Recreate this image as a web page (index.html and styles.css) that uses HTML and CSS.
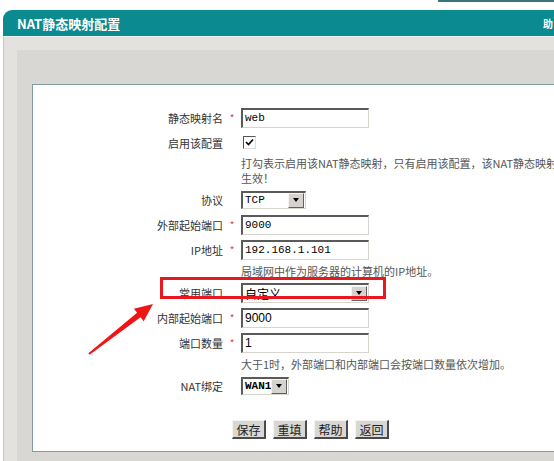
FILE: index.html
```html
<!doctype html>
<html lang="zh">
<head>
    <meta charset="utf-8">
    <title>NAT静态映射配置</title>
    <link rel="stylesheet" href="styles.css">
</head>
<body>
    <div class="top-strip"><div class="top-line"></div></div>
    <div class="shell">
        <div class="header">
            <span class="title">NAT静态映射配置</span>
            <span class="tools">助</span>
        </div>
        <div class="body-area">
            <div class="inner">
                <div class="panel">
                    <div class="form">
                        <div class="row">
                            <span class="label">静态映射名</span><span class="req">*</span>
                            <div class="input mono w128">web</div>
                        </div>
                        <div class="row">
                            <span class="label">启用该配置</span><span class="req"></span>
                            <span class="check">
                                <svg width="9" height="9" viewBox="0 0 9 9"><path d="M1 4 L3.5 6.5 L8 1.5" fill="none" stroke="#000" stroke-width="1.6"/></svg>
                            </span>
                        </div>
                        <div class="help">打勾表示启用该NAT静态映射，只有启用该配置，该NAT静态映射<br>生效！</div>
                        <div class="row">
                            <span class="label">协议</span><span class="req"></span>
                            <div class="select mono w65"><span class="val">TCP</span><span class="drop"><i></i></span></div>
                        </div>
                        <div class="row">
                            <span class="label">外部起始端口</span><span class="req">*</span>
                            <div class="input mono w128">9000</div>
                        </div>
                        <div class="row">
                            <span class="label">IP地址</span><span class="req">*</span>
                            <div class="input mono w128">192.168.1.101</div>
                        </div>
                        <div class="help single">局域网中作为服务器的计算机的IP地址。</div>
                        <div class="row">
                            <span class="label">常用端口</span><span class="req"></span>
                            <div class="select sans w128 tall"><span class="val">自定义</span><span class="drop"><i></i></span></div>
                        </div>
                        <div class="row">
                            <span class="label">内部起始端口</span><span class="req">*</span>
                            <div class="input sans w128">9000</div>
                        </div>
                        <div class="row">
                            <span class="label">端口数量</span><span class="req">*</span>
                            <div class="input sans w128">1</div>
                        </div>
                        <div class="help single">大于1时，外部端口和内部端口会按端口数量依次增加。</div>
                        <div class="row">
                            <span class="label">NAT绑定</span><span class="req"></span>
                            <div class="select mono bold w48"><span class="val">WAN1</span><span class="drop"><i></i></span></div>
                        </div>
                        <div class="buttons">
                            <button class="btn">保存</button>
                            <button class="btn">重填</button>
                            <button class="btn">帮助</button>
                            <button class="btn">返回</button>
                        </div>
                    </div>
                </div>
            </div>
        </div>
    </div>

    <!-- annotation: highlight box and arrow -->
    <div class="mark-box"></div>
    <svg class="mark-arrow" width="80" height="60" viewBox="80 300 80 60">
        <polygon points="153,304 133.9,308.7 137.1,312.8 88.4,353.2 89.6,354.8 140.5,317.2 143.7,321.3" fill="#f01414"/>
    </svg>
</body>
</html>
```

FILE: styles.css
```css
html, body {
    margin: 0;
    padding: 0;
}
body {
    background: #fff;
    overflow: hidden;
    width: 554px;
    height: 461px;
    position: relative;
    font-family: "Noto Sans CJK SC", sans-serif;
    font-size: 11px;
    color: #222;
}
.top-strip {
    height: 10px;
}
.top-line {
    margin-left: 438px;
    height: 2px;
    background: #3a7478;
}
.shell {
    margin-left: 3px;
}
.header {
    height: 26px;
    background: #0b8a8f;
    border-top-left-radius: 9px;
    border-bottom: 1px solid #eef0ef;
    display: flex;
    align-items: center;
    white-space: nowrap;
    color: #fff;
    font-weight: bold;
}
.title {
    padding-left: 14px;
    font-size: 13px;
}
.tools {
    margin-left: auto;
    margin-right: 1px;
    font-size: 10px;
}
.body-area {
    background: #e4e2df;
    border-left: 1px solid #c6c6c6;
    padding-top: 13px;
}
.inner {
    margin-left: 13px;
    background: #d9d7d4;
    padding: 34px 0 10px 15px;
}
.panel {
    background: #fff;
    border: 1px solid #7f9d9c;
    border-right: none;
    height: 366px;
}
.form {
    padding-top: 20px;
}
.row {
    display: flex;
    align-items: center;
    height: 25px;
}
.label {
    width: 190px;
    text-align: right;
    color: #333;
}
.req {
    width: 18px;
    text-align: center;
    color: #e03c3c;
    font-size: 10px;
}
.help {
    margin-left: 208px;
    line-height: 15px;
    padding: 1px 0;
    color: #555;
    white-space: nowrap;
}
.help.single {
    padding: 2px 0 1px;
}
.input, .select {
    box-sizing: border-box;
    height: 20px;
    border-top: 2px solid #5a5a5a;
    border-left: 2px solid #5a5a5a;
    border-bottom: 1px solid #d8d5cf;
    border-right: 1px solid #d8d5cf;
    background: #fff;
    color: #000;
    display: flex;
    align-items: center;
    padding-left: 2px;
}
.select {
    height: 18px;
    padding-right: 1px;
}
.select.tall {
    height: 20px;
}
.select .val {
    flex: 1;
}
.drop {
    width: 14px;
    height: 13px;
    background: #d6d3ce;
    border-top: 1px solid #f4f4f4;
    border-left: 1px solid #f4f4f4;
    border-right: 1px solid #606060;
    border-bottom: 1px solid #606060;
    display: flex;
    align-items: center;
    justify-content: center;
}
.drop i {
    width: 0;
    height: 0;
    border-left: 3px solid transparent;
    border-right: 3px solid transparent;
    border-top: 4px solid #000;
}
.mono {
    font-family: "Liberation Mono", monospace;
    font-size: 11px;
}
.bold {
    font-weight: bold;
}
.sans {
    font-family: "Liberation Sans", "Noto Sans CJK SC", sans-serif;
    font-size: 12px;
}
.w128 { width: 128px; }
.w65 { width: 65px; }
.w48 { width: 48px; }
.check {
    box-sizing: border-box;
    width: 13px;
    height: 13px;
    margin-left: 2px;
    border-top: 1px solid #555;
    border-left: 1px solid #555;
    border-right: 1px solid #ddd;
    border-bottom: 1px solid #ddd;
    display: flex;
    align-items: center;
    justify-content: center;
}
.buttons {
    display: flex;
    gap: 7px;
    margin: 22px 0 0 199px;
}
.btn {
    box-sizing: border-box;
    height: 19px;
    width: 34px;
    padding: 0;
    background: #d9d7d3;
    border-top: 1px solid #f4f4f4;
    border-left: 1px solid #f4f4f4;
    border-right: 2px solid #4a4a4a;
    border-bottom: 2px solid #4a4a4a;
    font-family: "Noto Sans CJK SC", sans-serif;
    font-size: 12px;
    color: #222;
    line-height: 15px;
}
.mark-box {
    position: absolute;
    left: 160px;
    top: 277px;
    width: 220px;
    height: 16px;
    border: 3px solid #e8191e;
}
.mark-arrow {
    position: absolute;
    left: 80px;
    top: 300px;
}
```
